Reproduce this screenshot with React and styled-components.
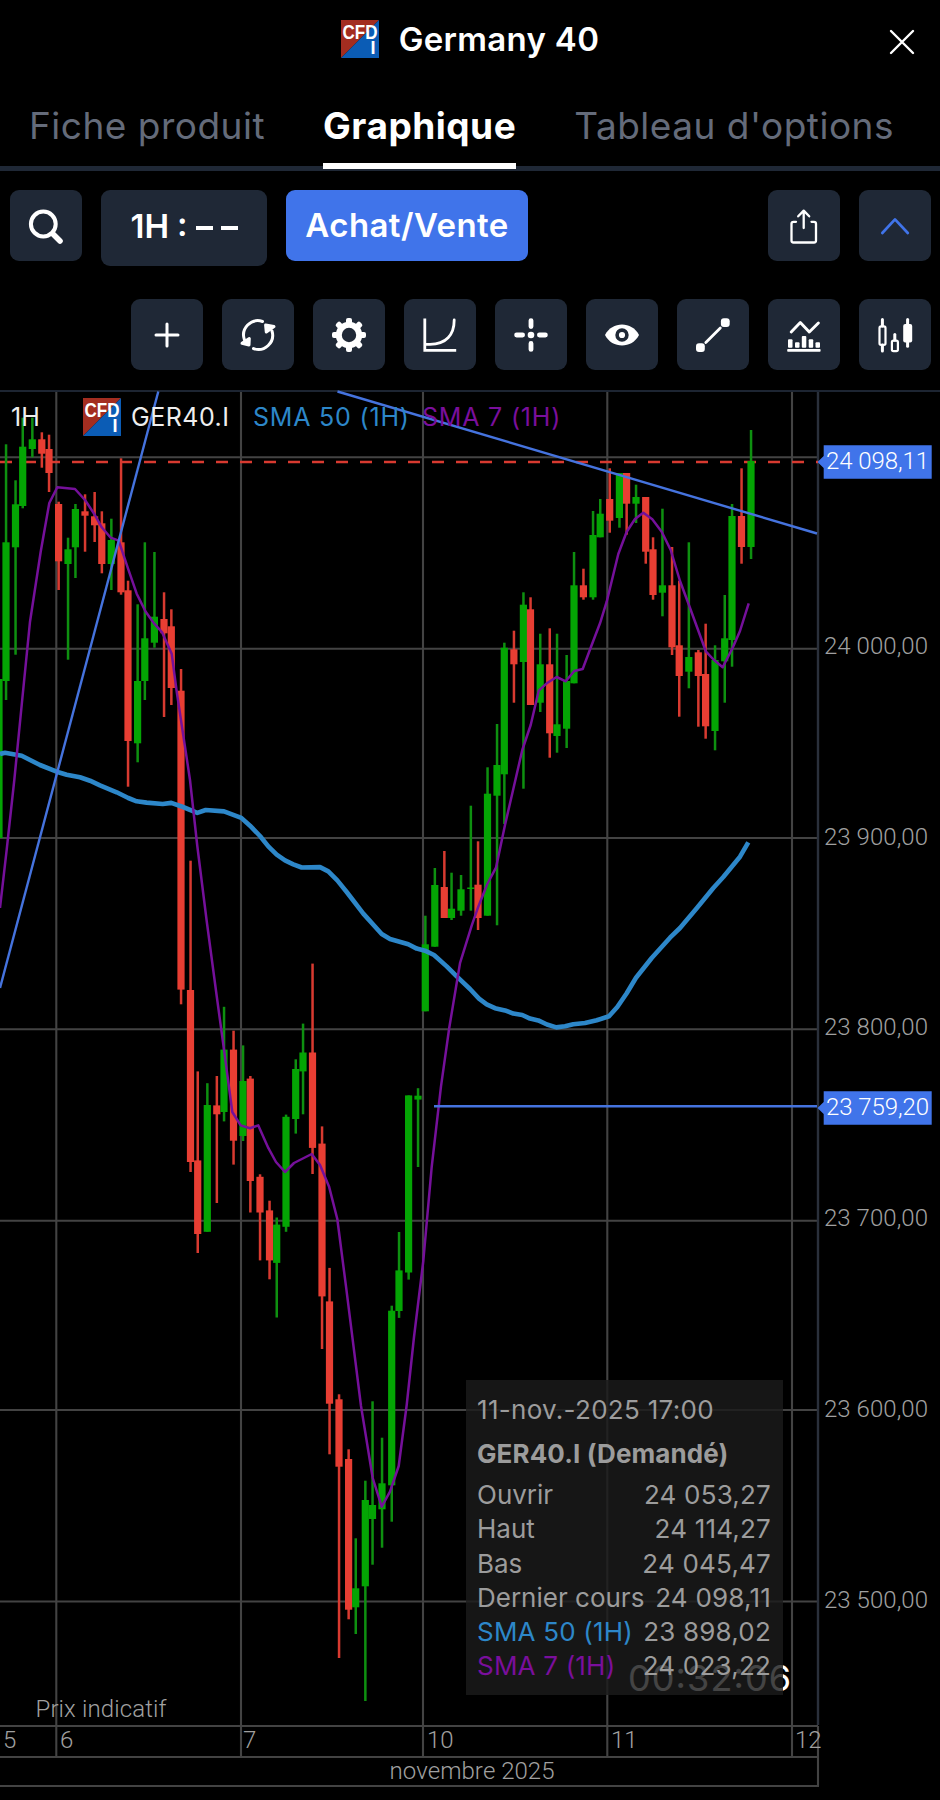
import React from "react";
import styled, { createGlobalStyle } from "styled-components";

const GlobalStyle = createGlobalStyle`
    * {
        box-sizing: border-box;
    }

    body {
        margin: 0;
        background: #000;
        font-family: Inter, "Liberation Sans", sans-serif;
    }
`;

const Page = styled.div`
    width: 940px;
    height: 1800px;
    overflow: hidden;
    background: #000;
    color: #fff;
`;

const Header = styled.header`
    display: flex;
    align-items: center;
    justify-content: center;
    height: 78px;
    position: relative;

    .title {
        margin-left: 20px;
        font-size: 33px;
        line-height: 38px;
        font-weight: 600;
        letter-spacing: 0.3px;
    }
`;

const CloseButton = styled.button`
    position: absolute;
    top: 28px;
    right: 24px;
    width: 28px;
    height: 28px;
    padding: 0;
    border: 0;
    background: none;
    display: flex;
`;

const Tabs = styled.nav`
    display: flex;
    justify-content: space-between;
    height: 93px;
    padding: 0 46px 0 29px;
    border-bottom: 5px solid #1f2836;
`;

const Tab = styled.a`
    height: 91px;
    padding-top: 26px;
    font-size: 37px;
    line-height: 44px;
    white-space: nowrap;
    letter-spacing: 0.5px;
    font-weight: ${(p) => (p.$active ? 700 : 400)};
    color: ${(p) => (p.$active ? "#fff" : "#646b7a")};
    border-bottom: 6px solid ${(p) => (p.$active ? "#fff" : "transparent")};
`;

const Toolbar = styled.div`
    display: flex;
    align-items: flex-start;
    justify-content: ${(p) => p.$justify || "flex-start"};
    gap: 19px;
    padding: 19px 9px 0 10px;
    height: ${(p) => p.$height}px;
`;

const Spacer = styled.div`
    flex: 1;
`;

const ToolButton = styled.button`
    display: flex;
    align-items: center;
    justify-content: center;
    flex: none;
    width: ${(p) => p.$width || 72}px;
    height: ${(p) => p.$height || 71}px;
    padding: 0;
    border: 0;
    border-radius: 9px;
    font-family: inherit;
    font-size: 33px;
    font-weight: 600;
    letter-spacing: 0.4px;
    color: #fff;
    background: ${(p) => (p.$primary ? "#4074ea" : "#1f2836")};

    .label {
        padding-bottom: 2px;
    }
`;

const Interval = styled.span`
    display: flex;
    gap: 8px;
    padding-bottom: 4px;
    font-size: 33px;
    letter-spacing: 0;

    .dash {
        width: 17px;
        height: 4px;
        margin-top: 20px;
        background: #fff;
    }

    .colon {
        margin-top: -2px;
    }
`;

const ChartArea = styled.main`
    position: relative;
    height: 1410px;
`;

const ChartSvg = styled.svg`
    display: block;

    text {
        font-family: Roboto, "Liberation Sans", sans-serif;
        font-size: 24px;
        font-weight: 300;
        font-kerning: none;
        fill: #a0a0a0;
    }

    .timer {
        font-family: Inter, sans-serif;
        font-size: 36px;
        font-weight: 400;
        fill: #fff;
    }

    .tag {
        fill: #fff;
    }
`;

const Legend = styled.div`
    position: absolute;
    top: 8px;
    left: 11px;
    display: flex;
    align-items: center;
    height: 38px;
    font-size: 25px;
    white-space: nowrap;
`;

const LegendItem = styled.span`
    margin-left: ${(p) => p.$left || 0}px;
    width: ${(p) => p.$width}px;
    letter-spacing: ${(p) => p.$spacing || 0}px;
    color: ${(p) => p.$color || "#eee"};
`;

const Tooltip = styled.section`
    position: absolute;
    left: 466px;
    top: 990px;
    width: 317px;
    height: 315px;
    padding: 13px 12px 0 11px;
    background: rgba(27, 27, 27, 0.82);
    color: #9c9c9c;
    font-size: 26px;
    line-height: 34px;
    white-space: nowrap;

    .date {
        letter-spacing: 0.3px;
    }

    .symbol {
        margin: 10px 0 7px;
        font-weight: 700;
        font-size: 26px;
        letter-spacing: 0.1px;
    }
`;

const TooltipRow = styled.div`
    display: flex;
    justify-content: space-between;
    height: 34.3px;
    letter-spacing: 0.2px;

    .label {
        color: ${(p) => p.$color || "inherit"};
        letter-spacing: ${(p) => (p.$color ? 0.2 : 0)}px;
    }
`;

// one entry per hour: x, high, body top, body bottom, low, rising
const candles = [
    [-1, 679, 679, 838, 838, 1],
    [6, 444.3, 542.3, 681, 700, 1],
    [15.5, 480.3, 504.3, 547.3, 654.7, 1],
    [22.7, 417.7, 446.7, 506, 508.3, 1],
    [32.3, 417.7, 439.3, 449, 457.3, 1],
    [41.8, 432.3, 439.3, 453.7, 467.7, 0],
    [49, 434.7, 449, 473, 492, 0],
    [58.6, 501.7, 504, 561.3, 590, 0],
    [68, 537.7, 549.3, 564, 659.7, 1],
    [75.4, 504, 509, 547.3, 578, 1],
    [85, 494.3, 511.3, 515.7, 551.7, 0],
    [94.6, 492, 516.3, 525.3, 542, 0],
    [101.8, 511.3, 523.3, 564, 573.3, 0],
    [111.3, 518.7, 540, 564, 590, 1],
    [121, 458.3, 542.3, 592.3, 594.7, 0],
    [128, 580.7, 590.3, 741, 786.7, 0],
    [137.6, 604.3, 681, 743.3, 762.3, 1],
    [144.8, 542.3, 638.3, 681, 700, 1],
    [154.4, 552, 616.7, 642.7, 647.7, 1],
    [164, 592.3, 619, 633.3, 717, 0],
    [171.3, 609.3, 626.3, 688, 705, 0],
    [181, 669, 690.7, 989.6, 1004.3, 0],
    [190.5, 860.7, 990, 1162, 1172, 0],
    [197.7, 1071.4, 1160.4, 1234, 1253, 0],
    [207.3, 1083.2, 1105, 1231.8, 1231.8, 1],
    [216.8, 1076, 1105.4, 1114.3, 1203, 0],
    [224, 1006.8, 1049.6, 1112, 1121.4, 1],
    [233.5, 1030.7, 1049.6, 1140.7, 1164.6, 0],
    [243, 1045.4, 1081, 1136, 1141, 1],
    [250.3, 1076, 1078.6, 1181, 1212.5, 0],
    [260, 1174.3, 1176.8, 1212.5, 1260.4, 0],
    [269.5, 1200.7, 1210.4, 1260.4, 1279.3, 0],
    [276.7, 1217.5, 1224.6, 1262.9, 1317.5, 1],
    [286, 1114.6, 1116.8, 1226.8, 1231.8, 1],
    [295.7, 1059.3, 1069, 1119, 1133.6, 1],
    [303, 1023.6, 1052.5, 1071.4, 1114.3, 1],
    [312.5, 963.6, 1052.5, 1147.9, 1174, 0],
    [322, 1126.4, 1143.6, 1296.4, 1349, 0],
    [329.5, 1267.9, 1301.4, 1403.7, 1454.3, 0],
    [339, 1394.3, 1399.3, 1466.7, 1658, 0],
    [348.6, 1449.3, 1459, 1609.7, 1619.3, 0],
    [355.7, 1538.3, 1588.3, 1607.3, 1634, 1],
    [365.3, 1480.7, 1500, 1586.3, 1701, 1],
    [372.5, 1401.3, 1505, 1519, 1564.7, 1],
    [382, 1437.7, 1483.3, 1509.3, 1547.7, 1],
    [391.7, 1305.7, 1310.7, 1485.3, 1521.7, 1],
    [399, 1232, 1270.4, 1311, 1317.9, 1],
    [408.6, 1095.4, 1095.4, 1272.5, 1279.6, 1],
    [418, 1088.2, 1095.7, 1099.6, 1167, 1],
    [425.3, 915.7, 944.3, 1011.3, 1011.3, 1],
    [434.8, 868, 885, 946.7, 946.7, 1],
    [444.3, 851, 887, 918, 918, 0],
    [451.5, 872.7, 908.7, 918, 920, 1],
    [461, 875, 889.3, 910.7, 915.7, 1],
    [470.8, 805.7, 887.5, 889, 910.7, 1],
    [478, 841.3, 884.7, 918, 930, 0],
    [487.5, 767.3, 793.7, 915.7, 915.7, 1],
    [497, 724, 765, 795.7, 925.3, 1],
    [504.3, 642.7, 647.7, 774.3, 824, 1],
    [513.9, 630.7, 649.3, 664.3, 702.7, 0],
    [523.4, 592.3, 604.7, 662, 788.7, 1],
    [530.5, 597.3, 609.3, 705, 705, 0],
    [540.2, 633.7, 664.3, 702.7, 712, 1],
    [549.7, 628.3, 664.3, 733.3, 757.7, 0],
    [557, 633.7, 724.3, 736, 752.7, 1],
    [566.6, 655, 681, 728.7, 748, 1],
    [574, 552, 585.3, 683.3, 683.3, 1],
    [583.4, 568.7, 585.3, 597.3, 599.7, 0],
    [593, 511, 535, 597.3, 599.7, 1],
    [600.2, 499, 513.7, 537.3, 537.3, 1],
    [609.7, 468.3, 499, 520.7, 532.7, 0],
    [619.4, 473, 473, 518, 527.7, 1],
    [626.6, 473, 473, 503.7, 534.7, 0],
    [636, 484.7, 497, 503.7, 523, 1],
    [645.7, 497, 497, 551.7, 563.7, 0],
    [653, 537.3, 549.3, 595, 599.7, 0],
    [662.4, 508.7, 585.3, 592.7, 616.3, 1],
    [672, 547, 585.3, 647.3, 655, 0],
    [679.2, 580.7, 645.3, 676, 716.7, 0],
    [688.8, 542.3, 657, 671.7, 688.3, 1],
    [698.3, 650, 652.3, 676, 726.7, 0],
    [705.6, 623.7, 674, 726.3, 738.7, 0],
    [715, 645.3, 660, 731, 750.3, 1],
    [724.7, 595, 638.3, 661.3, 702.7, 1],
    [732, 504, 516, 640, 666.7, 1],
    [741.5, 468.3, 516, 547, 563.7, 0],
    [751, 430, 461, 547, 559, 1],
];

const sma50 =
    "0,754 5,752.7 21.7,755.7 40,765 56.7,771.7 66.7,774.7 80,777.3 90,780.7 100,785.3 116.7,792.3 " +
    "128.3,798 136.7,801.3 146.7,802.6 162.7,804 171.3,802.9 183,807 197.3,812.9 205.7,810 224,811.4 " +
    "241.3,817.9 250,825.7 260,836 268.3,846.4 276.7,854.6 285,860.4 293.3,864.3 301.7,867.5 320,867.1 " +
    "328.3,871.4 337.3,880.4 346.7,892 363.3,913.6 381.7,934 390,939 408.3,944.3 416.7,948.6 425,950.7 " +
    "434,955 446.7,966.4 456.7,976.4 470,989 479,998.6 486.7,1004.3 495,1008.2 505,1010.4 513.3,1013.6 " +
    "522.3,1015 530,1018.6 538.3,1020.4 547,1024.5 556.3,1027.4 565,1026.3 573.3,1024.3 585,1023 " +
    "596.7,1020.3 609,1016.3 617.3,1007 626.7,993.3 636,977.7 651.7,958 670,937.7 680,928 696.7,908.3 " +
    "713.3,888 723.3,877 740,856.7 748.3,842.3";

const sma7 =
    "0,907.9 6.7,849.6 14.3,780 21.7,705 30,621.7 40.7,551.7 49.3,503 57.3,487.3 75,489 85,500 94.3,514 " +
    "101.7,527.3 110.7,537.7 118.7,540.7 128.3,569.3 136.7,593.7 145.7,611.7 154.3,623.7 162.3,632.7 " +
    "171.7,653.7 176.7,691.7 190,780 197.3,846 206.7,921 216.7,996 224,1049.6 232.3,1112 240.7,1125.4 " +
    "250,1128.2 258.3,1125.4 268.3,1147.9 276,1162 285,1172 294,1163 311.7,1154 320,1165 329,1186.4 " +
    "337.3,1219 346,1286.4 361,1406 372.7,1478 381.7,1506.7 390,1491.7 398.7,1466 406.7,1405 414,1337 " +
    "423.3,1261 431.7,1166.8 441,1086.4 449.3,1027.5 460,963.2 471.7,925.7 478.3,906.7 487.3,884 " +
    "496,867.7 505,825 522.3,750 530.7,725 538.7,690.7 546.7,683.3 556.7,677 565.7,681.3 574.3,671 " +
    "582.7,669 591.7,645 600,623.3 606.7,601.7 618.3,554 626.7,531.7 635,519 643.3,512.7 652.3,519.3 " +
    "661.7,531.7 670.7,550 680,581 688.3,603.3 706,651.7 714,660 722.7,667.3 732.7,647.7 740,631 748.7,603.3";

const gridRows = [457.3, 648.7, 838, 1029.3, 1220.8, 1410, 1601.5];
const gridColumns = [56.3, 241, 423, 607.3, 792];

const priceLabels = [
    ["24 000,00", 653.5],
    ["23 900,00", 844.5],
    ["23 800,00", 1035.3],
    ["23 700,00", 1226],
    ["23 600,00", 1417],
    ["23 500,00", 1607.5],
];

const dayLabels = [
    ["5", 3],
    ["6", 60],
    ["7", 243],
    ["10", 427],
    ["11", 611],
    ["12", 795],
];

const tooltipRows = [
    ["Ouvrir", "24 053,27"],
    ["Haut", "24 114,27"],
    ["Bas", "24 045,47"],
    ["Dernier cours", "24 098,11"],
    ["SMA 50 (1H)", "23 898,02", "#2d87c9"],
    ["SMA 7 (1H)", "24 023,22", "#7a0f9c"],
];

const CfdLogo = ({ size = 38 }) => (
    <svg width={size} height={size} viewBox="0 0 38 38">
        <path d="M0 0H38L0 38Z" fill="#a32d20" />
        <path d="M38 0V38H0Z" fill="#0b5cb5" />
        <g fill="#fff" fontFamily="Liberation Sans, sans-serif" fontWeight="700">
            <text x="1.5" y="18.8" fontSize="19.5" textLength="35" lengthAdjust="spacingAndGlyphs">
                CFD
            </text>
            <text x="29.6" y="33.8" fontSize="18">
                I
            </text>
        </g>
    </svg>
);

const Icon = ({ children, color = "#fff", width = 3 }) => (
    <svg
        width="72"
        height="72"
        viewBox="0 0 72 72"
        fill="none"
        stroke={color}
        strokeWidth={width}
        strokeLinecap="round"
        strokeLinejoin="round">
        {children}
    </svg>
);

const SearchIcon = () => (
    <Icon width={4}>
        <circle cx="33.3" cy="34" r="12.4" />
        <path d="M43 44L50 51" strokeWidth="5.6" />
    </Icon>
);

const ShareIcon = () => (
    <Icon width={2.3}>
        <path d="M28 31.8H25.5Q23.5 31.8 23.5 33.8V50.5Q23.5 52.5 25.5 52.5H46Q48 52.5 48 50.5V33.8Q48 31.8 46 31.8H43.5" />
        <path d="M35.7 38V20.8M30.2 26.3L35.7 20.6L41.2 26.3" />
    </Icon>
);

const CollapseIcon = () => (
    <Icon color="#4074ea" width={2.7}>
        <path d="M23.3 43L36 29.4L48.8 43" />
    </Icon>
);

const PlusIcon = () => (
    <Icon>
        <path d="M36 25V47M25 36H47" />
    </Icon>
);

const RefreshIcon = () => (
    <Icon>
        <path d="M40.5 22.5A14.3 14.3 0 0 0 22.5 41" />
        <path d="M31.5 49.6A14.3 14.3 0 0 0 50 32" />
        <path d="M20 44.3L27.3 39.5L27 46Z" fill="#fff" />
        <path d="M52 27.5L43.6 26L44.3 33Z" fill="#fff" />
    </Icon>
);

const SettingsIcon = () => (
    <Icon>
        <circle cx="36" cy="36" r="10.2" strokeWidth="6" />
        {[0, 45, 90, 135, 180, 225, 270, 315].map((angle) => (
            <rect
                key={angle}
                x="33"
                y="19"
                width="6"
                height="7"
                rx="2"
                fill="#fff"
                stroke="none"
                transform={`rotate(${angle} 36 36)`}
            />
        ))}
    </Icon>
);

const CurveIcon = () => (
    <Icon width={2.8}>
        <path d="M20.8 21V51.3H50.8" strokeLinecap="square" strokeLinejoin="miter" />
        <path d="M22 45.3H26C42 45.3 50.2 36 50.2 21" />
    </Icon>
);

const CrosshairIcon = () => (
    <Icon width={4.8}>
        <path d="M36 21.6V27.6M36 44.4V50.4M21.6 36H27.6M44.4 36H50.4" />
        <circle cx="36" cy="36" r="3.3" fill="#fff" stroke="none" />
    </Icon>
);

const EyeIcon = () => (
    <Icon>
        <path d="M19 36C26 22 46 22 53 36C46 50 26 50 19 36Z" fill="#fff" stroke="none" />
        <circle cx="36" cy="36" r="4.9" stroke="#1f2836" strokeWidth="3.6" />
    </Icon>
);

const TrendLineIcon = () => (
    <Icon width={2.8}>
        <rect x="43.9" y="19.3" width="8.8" height="8.8" rx="3" fill="#fff" stroke="none" />
        <rect x="19" y="44.3" width="8.8" height="8.8" rx="3" fill="#fff" stroke="none" />
        <path d="M28.8 43.4L43.3 29" />
    </Icon>
);

const IndicatorIcon = () => (
    <Icon width={2.9}>
        <path d="M23.2 33L32.3 23.5L41.3 33L50.4 24" />
        <g fill="#fff" stroke="none">
            <rect x="20" y="40.2" width="4.5" height="8.6" rx="1" />
            <rect x="27" y="43.2" width="4.5" height="5.6" rx="1" />
            <rect x="33.8" y="37" width="4.5" height="11.8" rx="1" />
            <rect x="40.7" y="40.2" width="4.5" height="8.6" rx="1" />
            <rect x="47.5" y="43.2" width="4.5" height="5.6" rx="1" />
            <rect x="19.2" y="50" width="33.4" height="2.8" rx="0.8" />
        </g>
    </Icon>
);

const CandlesIcon = () => (
    <Icon width={2.2}>
        <rect x="20.5" y="27.3" width="6" height="18.6" rx="1.6" />
        <path d="M23.4 20.5V27M23.4 46V52" strokeWidth="3" />
        <rect x="32.9" y="41.6" width="6" height="10.6" rx="1.6" />
        <path d="M35.8 35.5V41" strokeWidth="3" />
        <rect x="44.2" y="25" width="9" height="18.6" rx="2" fill="#fff" stroke="none" />
        <path d="M48.6 20.5V47.2" strokeWidth="3" />
    </Icon>
);

const Candle = ({ data }) => {
    const [x, high, top, bottom, low, up] = data;
    return (
        <g>
            <rect x={x - 1.2} y={high} width="2.5" height={low - high} fill={up ? "#0e9010" : "#d83a30"} />
            <rect x={x - 3.6} y={top} width="7.2" height={bottom - top} fill={up ? "#04a504" : "#e83e33"} />
        </g>
    );
};

const PriceTag = ({ y, children }) => (
    <g>
        <path d={`M817.5 ${y}L823.7 ${y - 6}V${y - 16.7}H931.7V${y + 16.7}H823.7V${y + 6}Z`} fill="#4074ea" />
        <text className="tag" x="826" y={y + 6.7} textLength="103">
            {children}
        </text>
    </g>
);

function PriceChart() {
    return (
        <ChartSvg width="940" height="1410" viewBox="0 390 940 1410">
            <g stroke="#434343" strokeWidth="2.1">
                {gridRows.map((y) => (
                    <path key={y} d={`M0 ${y}H818`} />
                ))}
                {gridColumns.map((x) => (
                    <path key={x} d={`M${x} 391V1757`} />
                ))}
                <path d="M0 1726H818M0 1757H818M0 1786H819M818 1726V1786" />
            </g>
            <path d="M818 391V1725" stroke="#2a303b" strokeWidth="2.4" />
            <path d="M0 391H940" stroke="#1d2532" strokeWidth="2" />

            <path d="M0 462H818" stroke="#d83a30" strokeWidth="2.5" strokeDasharray="12 12" />
            {candles.map((data) => (
                <Candle key={data[0]} data={data} />
            ))}
            <g fill="none" strokeLinejoin="round">
                <polyline points={sma50} stroke="#2d87c9" strokeWidth="4.6" />
                <polyline points={sma7} stroke="#75109a" strokeWidth="2.5" />
                <g stroke="#4573de" strokeWidth="2.4">
                    <path d="M0 988L158.3 391.5" />
                    <path d="M337.5 391.5L817 533.5" />
                    <path d="M434 1106.3H817" />
                </g>
            </g>

            {priceLabels.map(([label, y]) => (
                <text key={label} x="824" y={y} textLength="104">
                    {label}
                </text>
            ))}
            <PriceTag y={462}>24 098,11</PriceTag>
            <PriceTag y={1108}>23 759,20</PriceTag>

            <text x="35.5" y="1717" textLength="131">
                Prix indicatif
            </text>
            {dayLabels.map(([label, x]) => (
                <text key={label} x={x} y="1748">
                    {label}
                </text>
            ))}
            <text x="389.5" y="1779" textLength="165">
                novembre 2025
            </text>
            <text className="timer" x="628" y="1691" textLength="163">
                00:32:06
            </text>
        </ChartSvg>
    );
}

export default function App() {
    return (
        <Page>
            <GlobalStyle />
            <Header>
                <CfdLogo />
                <span className="title">Germany 40</span>
                <CloseButton>
                    <svg width="28" height="28" stroke="#fff" strokeWidth="2.4" strokeLinecap="round">
                        <path d="M3 3L25 25M25 3L3 25" />
                    </svg>
                </CloseButton>
            </Header>
            <Tabs>
                <Tab>Fiche produit</Tab>
                <Tab $active>Graphique</Tab>
                <Tab>Tableau d'options</Tab>
            </Tabs>
            <Toolbar $height={109}>
                <ToolButton>
                    <SearchIcon />
                </ToolButton>
                <ToolButton $width={166} $height={76}>
                    <Interval>
                        <span>1H</span>
                        <span className="colon">:</span>
                        <span className="dash" />
                        <span className="dash" />
                    </Interval>
                </ToolButton>
                <ToolButton $width={242} $primary>
                    <span className="label">Achat/Vente</span>
                </ToolButton>
                <Spacer />
                <ToolButton>
                    <ShareIcon />
                </ToolButton>
                <ToolButton>
                    <CollapseIcon />
                </ToolButton>
            </Toolbar>
            <Toolbar $height={110} $justify="flex-end">
                <ToolButton>
                    <PlusIcon />
                </ToolButton>
                <ToolButton>
                    <RefreshIcon />
                </ToolButton>
                <ToolButton>
                    <SettingsIcon />
                </ToolButton>
                <ToolButton>
                    <CurveIcon />
                </ToolButton>
                <ToolButton>
                    <CrosshairIcon />
                </ToolButton>
                <ToolButton>
                    <EyeIcon />
                </ToolButton>
                <ToolButton>
                    <TrendLineIcon />
                </ToolButton>
                <ToolButton>
                    <IndicatorIcon />
                </ToolButton>
                <ToolButton>
                    <CandlesIcon />
                </ToolButton>
            </Toolbar>
            <ChartArea>
                <PriceChart />
                <Legend>
                    <LegendItem $width={72}>1H</LegendItem>
                    <CfdLogo />
                    <LegendItem $left={10} $width={122} $spacing={0.5}>
                        GER40.I
                    </LegendItem>
                    <LegendItem $width={169} $color="#2d87c9" $spacing={0.8}>
                        SMA 50 (1H)
                    </LegendItem>
                    <LegendItem $color="#7a0f9c" $spacing={0.8}>
                        SMA 7 (1H)
                    </LegendItem>
                </Legend>
                <Tooltip>
                    <div className="date">11-nov.-2025 17:00</div>
                    <div className="symbol">GER40.I (Demandé)</div>
                    {tooltipRows.map(([label, value, color]) => (
                        <TooltipRow key={label} $color={color}>
                            <span className="label">{label}</span>
                            <span>{value}</span>
                        </TooltipRow>
                    ))}
                </Tooltip>
            </ChartArea>
        </Page>
    );
}
